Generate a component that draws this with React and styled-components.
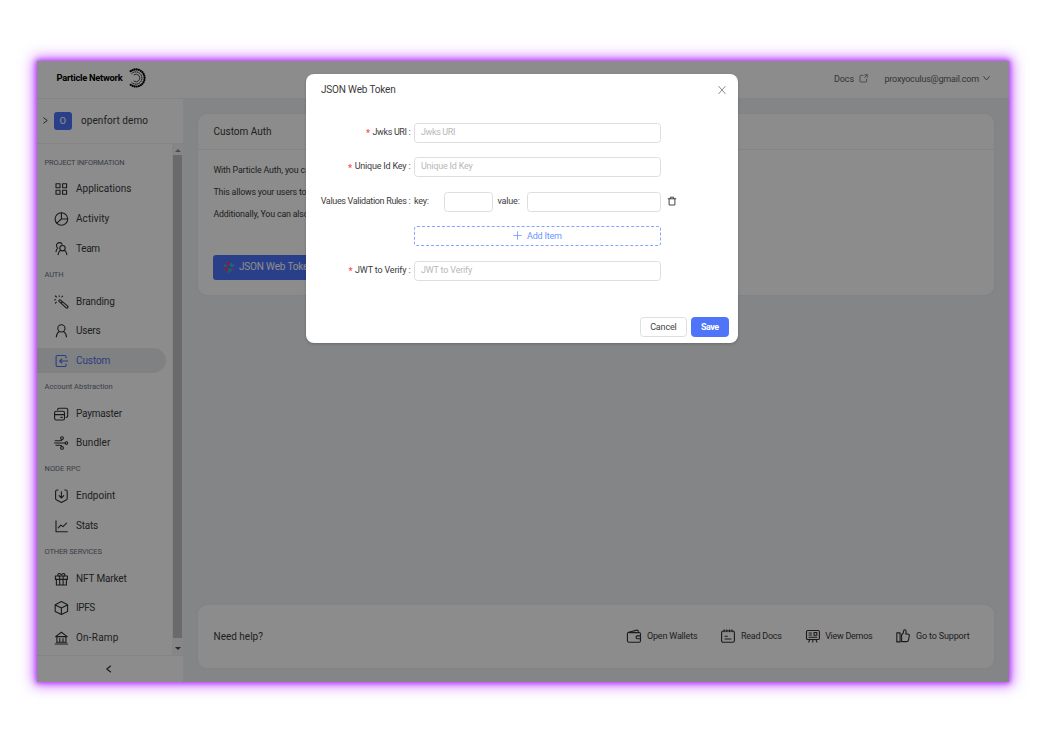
import React from "react";
import styled, { createGlobalStyle } from "styled-components";

const Global = createGlobalStyle`
  * { box-sizing: border-box; }
  body { margin: 0; background: #fff; font-family: Roboto, "Liberation Sans", sans-serif; }
  button, input { font-family: inherit; margin: 0; }
`;

const Page = styled.div`
  width: 1047px;
  height: 743px;
  padding: 61px 38px 61px 37px;
  overflow: hidden;
`;
const Frame = styled.div`
  position: relative;
  display: flex;
  flex-direction: column;
  width: 972px;
  height: 620.5px;
  background: #fff;
  box-shadow: 0 0 5px 1px #b637ff, 0 0 13px 3px rgba(182, 55, 255, 0.75);
`;
const Text = styled.span`
  font-size: ${(p) => p.$size || 10}px;
  letter-spacing: ${(p) => p.$ls || 0}px;
  color: ${(p) => p.$color || "#3a3a3a"};
  font-weight: ${(p) => p.$weight || 400};
  line-height: 14px;
  white-space: nowrap;
`;
const Svg = styled.svg`
  width: ${(p) => p.$s || 16}px;
  height: ${(p) => p.$s || 16}px;
  flex: none;
  fill: none;
  stroke: ${(p) => p.$c || "#303030"};
  stroke-width: ${(p) => p.$w || 1.1};
  stroke-linecap: round;
  stroke-linejoin: round;
`;

const Header = styled.header`
  height: 38px;
  display: flex;
  align-items: center;
  padding: 0 19px 3px 19.5px;
  border-bottom: 1px solid #f0f0f0;
`;
const Logo = styled.div`
  display: flex;
  align-items: center;
  gap: 4px;
  flex: 1;
`;
const HeaderLinks = styled.div`
  display: flex;
  align-items: center;
  padding-top: 1px;
`;
const EmailGroup = styled.div`
  display: flex;
  align-items: center;
  gap: 4px;
  margin-left: 16px;
`;
const DocsGroup = styled(EmailGroup)`
  gap: 5.5px;
  margin-left: 0;
`;
const Body = styled.div`
  flex: 1;
  display: flex;
  min-height: 0;
`;
const Sidebar = styled.aside`
  width: 146px;
  display: flex;
  flex-direction: column;
`;
const Workspace = styled.div`
  height: 44.5px;
  display: flex;
  align-items: center;
  padding-left: 5px;
  border-bottom: 1px solid #f0f0f0;
`;
const Badge = styled.div`
  width: 17.5px;
  height: 17.5px;
  border-radius: 3px;
  background: #4e74fa;
  color: #e8ecff;
  font-size: 9.5px;
  font-weight: 500;
  line-height: 17px;
  text-align: center;
  margin: 0 9.5px 0 5px;
`;
const NavArea = styled.div`
  flex: 1;
  display: flex;
  min-height: 0;
`;
const Nav = styled.nav`
  flex: 1;
  display: flex;
  flex-direction: column;
  padding-top: 8px;
`;
const SectionLabel = styled.div`
  height: 23.1px;
  padding: 0 0 1px 7.5px;
  display: flex;
  align-items: center;
`;
const NavItem = styled.div`
  height: 25px;
  margin: 2.35px 6px 2.35px 0;
  padding-left: 16px;
  display: flex;
  align-items: center;
  gap: 7px;
  border-radius: 0 13px 13px 0;
  background: ${(p) => (p.$active ? "#e9ecee" : "transparent")};
`;
const Scrollbar = styled.div`
  width: 11px;
  background: #f4f4f4;
  display: flex;
  flex-direction: column;
  align-items: center;
`;
const Arrow = styled.div`
  width: 0;
  height: 0;
  border: 3px solid transparent;
  ${(p) => (p.$up ? "border-bottom-color: #8b8b8b; border-top: 0; margin: 5px 0 3.5px;" : "border-top-color: #4b4b4b; border-bottom: 0; margin: 9px 0 5px;")}
`;
const Thumb = styled.div`
  flex: 1;
  width: 9px;
  background: #c1c1c1;
`;
const Collapse = styled.div`
  height: 27px;
  border-top: 1px solid #f0f0f0;
  display: flex;
  align-items: center;
  justify-content: center;
  padding: 1px 1.5px 0 0;
`;
const Main = styled.main`
  flex: 1;
  background: #eff2f5;
  display: flex;
  flex-direction: column;
  justify-content: space-between;
  padding: 15px 15.5px 13.5px 15px;
`;
const Card = styled.section`
  background: #fff;
  border-radius: 9px;
  box-shadow: 0 0 3px rgba(0, 0, 0, 0.05);
`;
const AuthCard = styled(Card)`
  height: 181px;
`;
const CardTitle = styled.div`
  height: 36px;
  padding: 1px 15.5px 0;
  display: flex;
  align-items: center;
  border-bottom: 1px solid #f0f0f0;
`;
const CardBody = styled.div`
  padding: 9px 15.4px;
`;
const Line = styled.div`
  height: 22.2px;
  display: flex;
  align-items: center;
`;
const TokenButton = styled.button`
  margin-top: 29.5px;
  width: 124px;
  height: 25px;
  border: 0;
  padding: 0 0 1px 9.5px;
  border-radius: 3px;
  background: #4e74fa;
  display: flex;
  align-items: center;
  gap: 4px;
`;
const HelpCard = styled(Card)`
  height: 63.5px;
  padding: 0 24px 1px 15.5px;
  display: flex;
  align-items: center;
`;
const HelpTitle = styled.div`
  flex: 1;
  display: flex;
  padding-top: 2px;
`;
const HelpLink = styled.div`
  display: flex;
  align-items: center;
  gap: 4.5px;
  margin-left: ${(p) => p.$ml || 0}px;
`;

const Mask = styled.div`
  position: absolute;
  inset: 0;
  background: rgba(0, 0, 0, 0.45);
`;
const Modal = styled.div`
  position: absolute;
  left: 269.4px;
  top: 13px;
  width: 432px;
  height: 269.4px;
  background: #fff;
  border-radius: 8px;
  box-shadow: 0 1px 3px rgba(0, 0, 0, 0.2);
  display: flex;
  flex-direction: column;
`;
const ModalHead = styled.div`
  height: 31px;
  padding: 0 11.5px 0 14.5px;
  display: flex;
  align-items: center;
  justify-content: space-between;
`;
const Form = styled.div`
  flex: 1;
  padding-top: 17.7px;
  display: flex;
  flex-direction: column;
  gap: 14.5px;
`;
const Row = styled.div`
  height: 20px;
  display: flex;
  align-items: center;
`;
const Label = styled.label`
  width: 104px;
  padding-bottom: 2px;
  margin-right: 3.5px;
  display: flex;
  justify-content: flex-end;
  align-items: center;
`;
const Star = styled.span`
  color: #ff4d4f;
  font-size: 9px;
  font-weight: 700;
  line-height: 10px;
  margin: 3px 2.5px 0 0;
`;
const Input = styled.input`
  width: ${(p) => p.$w || 247}px;
  height: 20px;
  border: 1px solid #dedede;
  border-radius: 3.5px;
  padding: 0 6px 2px;
  font-size: 9px;
  letter-spacing: ${(p) => p.$ls || 0}px;
  background: #fff;
  outline: none;
  &::placeholder { color: #b8b8b8; opacity: 1; }
`;
const Inline = styled.span`
  display: flex;
  width: ${(p) => p.$w}px;
  padding: 0 0 2px ${(p) => p.$pl || 0}px;
`;
const AddButton = styled.button`
  width: 247px;
  height: 20px;
  margin-left: 107.5px;
  border: 1px dashed #85a5ff;
  border-radius: 3px;
  background: #fff;
  display: flex;
  align-items: center;
  justify-content: center;
  gap: 5px;
  padding: 0 0 1px;
`;
const ModalFoot = styled.div`
  display: flex;
  justify-content: flex-end;
  gap: 4px;
  padding: 0 9.5px 6px 0;
`;
const Button = styled.button`
  width: ${(p) => p.$w}px;
  height: 20.5px;
  border-radius: 3.5px;
  padding: 0 0 1px;
  border: 1px solid ${(p) => (p.$primary ? "#4e74fa" : "#dedede")};
  background: ${(p) => (p.$primary ? "#4e74fa" : "#fff")};
  display: flex;
  align-items: center;
  justify-content: center;
`;

const icons = {
  apps: <><rect x="3" y="2.7" width="4" height="4" /><rect x="9.6" y="2.7" width="4" height="4" /><rect x="3" y="9.3" width="4" height="4" /><rect x="9.6" y="9.3" width="4" height="4" /></>,
  activity: <><circle cx="8.4" cy="8" r="6.3" /><path d="M8.4 1.7V8h6.3M8.4 8l-4.7 4.2" /></>,
  team: <><path d="M9.1 3.2A3 3 0 1 0 4.8 7.1C3.8 7.8 3.2 9 3 10.6" /><circle cx="9.5" cy="7.2" r="2.7" /><path d="M7.6 9.3c-1.4.9-2.2 2.3-2.5 4.3M11.4 9.3c1.4.9 2.2 2.3 2.5 4.3" /></>,
  wand: <><path d="M7.3 5.9 14.7 12.2a1.1 1.1 0 0 1-1.5 1.6L6 7.3a1 1 0 0 1 1.3-1.4zM9.4 7.7 8.1 9.1" /><path d="m2.4 2 1 1M6.2 1.7v.8M1.6 5.8h1M9.6 2.1l-.8.9M3.3 8.2l-.9.9" /></>,
  user: <><circle cx="8.4" cy="5.4" r="3.6" /><path d="M3.3 13.9c.4-3.2 1.5-4.6 3-5.4M13.5 13.9c-.4-3.2-1.5-4.6-3-5.4" /></>,
  custom: <><path d="M13.1 5V3.8A1.3 1.3 0 0 0 11.8 2.5H4.4A1.3 1.3 0 0 0 3.1 3.8v8.4a1.3 1.3 0 0 0 1.3 1.3h7.4a1.3 1.3 0 0 0 1.3-1.3V11M14.7 8H6.8M8.8 6 6.8 8l2 2" /></>,
  pay: <><rect x="1.6" y="5.2" width="9.9" height="8.8" rx="1.6" /><path d="M4.6 3.8A1.6 1.6 0 0 1 6.2 2.2h7a1.5 1.5 0 0 1 1.5 1.5v6.2a1.5 1.5 0 0 1-1.5 1.5M1.6 8.6h9.9M7.9 11.4h1.3" /></>,
  bundler: <><path d="M2.2 5.8h4.6c1.5 0 2.1-.5 2.1-1.4M1.6 8h10.6M3 10.2h3.8c1.5 0 2.1.5 2.1 1.4" /><circle cx="9" cy="3.1" r="1.4" /><circle cx="13.4" cy="8" r="1.3" /><circle cx="9" cy="12.9" r="1.4" /></>,
  endpoint: <><path d="M5 2h-.9a1.5 1.5 0 0 0-1.5 1.5v7c0 .8.5 1.3 1.1 1.6l4.7 2.3 4.7-2.3c.6-.3 1.1-.8 1.1-1.6v-7A1.5 1.5 0 0 0 12.7 2h-.9M8.4 3.8v6M6.1 7.7 8.4 10l2.3-2.3" /></>,
  stats: <><path d="M3 2.8v10.9h11.3M5.3 9.8l2.5-2.7 2.2 1.5 3.6-3.4" /></>,
  gift: <><rect x="2.4" y="5" width="12" height="3.4" /><path d="M3.4 8.4V14h10V8.4M6.7 5v9M10.1 5v9M5.4 5C4 3.4 5.9 1.1 8.4 3.8c2.5-2.7 4.4-.4 3 1.2" /></>,
  cube: <><path d="m8.4 1.6 6.2 3.1v6.7l-6.2 3.1-6.2-3.1V4.7zM2.4 4.9l6 3.1 6-3.1M8.4 8v6.2" /></>,
  bank: <><path d="m8.4 2.3 5.8 4.3H2.6zM2.2 14h12.4M3.4 12.2h10M3.9 6.8v5M6.8 8.5V12M10 8.5V12M12.9 6.8v5" /></>,
  wallet: <><path d="M3.1 4.6h10.1a1.3 1.3 0 0 1 1.3 1.3v6.9a1.4 1.4 0 0 1-1.4 1.4H2.9a1.5 1.5 0 0 1-1.5-1.5V5.7c0-.8.5-1.2 1.2-1.4L11 2.1a1 1 0 0 1 1.2 1v1.3M14.4 7.9h-3a1.4 1.4 0 0 0 0 2.8h3" /></>,
  doc: <><rect x="1.6" y="3" width="12.8" height="11.3" rx="1.8" /><path d="M4.1 1.9v1.9M6.8 1.9v1.9M9.5 1.9v1.9M12 1.9v1.9M5 8.3h2.3M5 11h6" /></>,
  demo: <><rect x="1.5" y="2.5" width="12.9" height="9" rx="1.3" /><rect x="9" y="4.5" width="2.8" height="2.8" /><path d="M4 5h2.5M4 7h2.5M4 9.2h7.8M4.7 11.7 3.7 14M7.8 11.7V14M11 11.7l.9 2.3" /></>,
  thumb: <><path d="M1.8 4.9h3.3v9H1.8zM6.6 13.6V6.6C8.2 5.8 8.7 4.3 8.8 2.6c.1-1.4 2.2-1.2 2.3.6.1 1-.1 1.9-.4 2.8h2c1.2 0 1.8.9 1.6 2l-.8 4.1c-.2.9-.8 1.5-1.7 1.5z" /></>,
};
const Icon = ({ name, color, size, width }) => (
  <Svg viewBox="0 0 16 16" $c={color} $s={size} $w={width}>{icons[name]}</Svg>
);

const sections = [
  ["PROJECT INFORMATION", -0.18, [["apps", "Applications", 0], ["activity", "Activity", 0.07], ["team", "Team", -0.3]]],
  ["AUTH", -0.18, [["wand", "Branding", -0.1], ["user", "Users", -0.2], ["custom", "Custom", -0.1]]],
  ["Account Abstraction", 0, [["pay", "Paymaster", -0.2], ["bundler", "Bundler", 0.05]]],
  ["NODE RPC", 0.05, [["endpoint", "Endpoint", 0]  , ["stats", "Stats", -0.2]]],
  ["OTHER SERVICES", -0.15, [["gift", "NFT Market", -0.15], ["cube", "IPFS", -0.45], ["bank", "On-Ramp", 0.22]]],
];

const dots = Array.from({ length: 19 }, (_, i) => {
  const a = ((-128 + i * 14.2) * Math.PI) / 180;
  return [10 + 8.6 * Math.cos(a), 10 + 8.6 * Math.sin(a)];
});
const ParticleMark = () => (
  <Svg viewBox="0 0 20 20" $s={20} $c="#000" $w={1}>
    {dots.map(([x, y], i) => <circle key={i} cx={x} cy={y} r="1.15" fill="#000" stroke="none" />)}
    <path d="M5.4 5.8A6.1 6.1 0 1 1 5.4 14.2" strokeDasharray="1.4 .5" strokeLinecap="butt" />
    <path d="M8 6.8A3.8 3.8 0 1 1 8 13.2" strokeWidth=".7" />
  </Svg>
);

const Field = ({ label, ls, name }) => (
  <Row>
    <Label>
      <Star>*</Star>
      <Text $size={9} $ls={ls} $color="#3c3c3c">{label} :</Text>
    </Label>
    <Input placeholder={name} $ls={ls} />
  </Row>
);

export default function App() {
  return (
    <Page>
      <Global />
      <Frame>
        <Header>
          <Logo>
            <Text $size={9.3} $weight={700} $color="#000" $ls={-0.25}>Particle Network</Text>
            <ParticleMark />
          </Logo>
          <HeaderLinks>
            <DocsGroup>
              <Text $size={9} $color="#5c5f66" $ls={-0.1}>Docs</Text>
              <Svg viewBox="0 0 10 10" $s={9} $c="#73767d" $w={0.9}><path d="M4.5 1.5H1.8a.7.7 0 0 0-.7.7v6a.7.7 0 0 0 .7.7h6a.7.7 0 0 0 .7-.7V5.5M6.3.8h2.9v2.9M9 1 6.2 3.8" /></Svg>
            </DocsGroup>
            <EmailGroup>
              <Text $size={9} $color="#5c5f66" $ls={-0.2}>proxyoculus@gmail.com</Text>
              <Svg viewBox="0 0 8 8" $s={7} $c="#5c5f66" $w={1}><path d="m.8 1.8 3.2 4 3.2-4" /></Svg>
            </EmailGroup>
          </HeaderLinks>
        </Header>
        <Body>
          <Sidebar>
            <Workspace>
              <Svg viewBox="0 0 7 8" $s={7} $w={1}><path d="m1.5 1 4 3-4 3" /></Svg>
              <Badge>O</Badge>
              <Text $size={10} $ls={0.07}>openfort demo</Text>
            </Workspace>
            <NavArea>
              <Nav>
                {sections.map(([title, tls, items]) => (
                  <React.Fragment key={title}>
                    <SectionLabel><Text $size={7.5} $ls={tls} $color="#6b7080">{title}</Text></SectionLabel>
                    {items.map(([icon, name, ls]) => {
                      const active = icon === "custom";
                      return (
                        <NavItem key={name} $active={active}>
                          <Icon name={icon} color={active ? "#5470e8" : "#303030"} />
                          <Text $size={10} $ls={ls} $color={active ? "#5470e8" : "#3a3a3a"}>{name}</Text>
                        </NavItem>
                      );
                    })}
                  </React.Fragment>
                ))}
              </Nav>
              <Scrollbar><Arrow $up /><Thumb /><Arrow /></Scrollbar>
            </NavArea>
            <Collapse><Svg viewBox="0 0 8 8" $s={8}><path d="M5.6 1 1.8 4l3.8 3" /></Svg></Collapse>
          </Sidebar>
          <Main>
            <AuthCard>
              <CardTitle><Text $size={10} $ls={0}>Custom Auth</Text></CardTitle>
              <CardBody>
                <Line><Text $size={8.8} $ls={-0.13}>With Particle Auth, you can</Text></Line>
                <Line><Text $size={8.8} $ls={-0.16}>This allows your users to log</Text></Line>
                <Line><Text $size={8.8} $ls={-0.16}>Additionally, You can also</Text></Line>
                <TokenButton>
                  <Svg viewBox="0 0 12 12" $s={12} $w={1.8}>
                    <path d="M6 1v2.5M4 2.2l1 1.5" stroke="#e83e72" /><path d="M8.5 2.7 7.5 4M8.6 5l2-.7" stroke="#25c7d9" />
                    <path d="M9 7.3l1.6.4" stroke="#d63aff" /><path d="M6 8.6V11M7.3 8.2l1 1.4" stroke="#22c6a2" />
                    <path d="M4.6 8 3.5 9.5M3.3 7l-2 .7" stroke="#e83e72" /><path d="M3 4.8 1.4 4.3" stroke="#22c6d2" />
                  </Svg>
                  <Text $size={10} $ls={-0.15} $color="#fff">JSON Web Token</Text>
                </TokenButton>
              </CardBody>
            </AuthCard>
            <HelpCard>
              <HelpTitle><Text $size={10} $ls={0}>Need help?</Text></HelpTitle>
              <HelpLink><Icon name="wallet" /><Text $size={9} $ls={-0.18}>Open Wallets</Text></HelpLink>
              <HelpLink $ml={23}><Icon name="doc" /><Text $size={9} $ls={-0.25}>Read Docs</Text></HelpLink>
              <HelpLink $ml={23}><Icon name="demo" /><Text $size={9} $ls={-0.27}>View Demos</Text></HelpLink>
              <HelpLink $ml={23}><Icon name="thumb" /><Text $size={9} $ls={-0.15}>Go to Support</Text></HelpLink>
            </HelpCard>
          </Main>
        </Body>
        <Mask />
        <Modal>
          <ModalHead>
            <Text $size={10} $ls={-0.15}>JSON Web Token</Text>
            <Svg viewBox="0 0 10 10" $s={10} $c="#8c8c8c" $w={1}><path d="m1.8 1.4 6.4 7.2M8.2 1.4 1.8 8.6" /></Svg>
          </ModalHead>
          <Form>
            <Field label="Jwks URI" name="Jwks URI" ls={-0.35} />
            <Field label="Unique Id Key" name="Unique Id Key" ls={-0.2} />
            <Row>
              <Label><Text $size={9} $ls={-0.33} $color="#3c3c3c">Values Validation Rules :</Text></Label>
              <Inline $w={29.7}><Text $size={9} $ls={-0.2} $color="#3c3c3c">key:</Text></Inline>
              <Input $w={49.3} aria-label="key" />
              <Inline $w={34} $pl={4.5}><Text $size={9} $ls={-0.15} $color="#3c3c3c">value:</Text></Inline>
              <Input $w={134} aria-label="value" />
              <Inline $w={20} $pl={6}>
                <Svg viewBox="0 0 10 10" $s={10} $c="#444" $w={1}><path d="M1.2 2.8h7.6M3.3 2.6V1.2h3.4v1.4M2.1 3v6h5.8V3" /></Svg>
              </Inline>
            </Row>
            <AddButton>
              <Svg viewBox="0 0 10 10" $s={9} $c="#7f9eff" $w={1}><path d="M5 .8v8.4M.8 5h8.4" /></Svg>
              <Text $size={9} $ls={-0.2} $color="#7093ff">Add Item</Text>
            </AddButton>
            <Field label="JWT to Verify" name="JWT to Verify" ls={-0.18} />
          </Form>
          <ModalFoot>
            <Button $w={47}><Text $size={9} $ls={-0.15} $color="#444">Cancel</Text></Button>
            <Button $w={38} $primary><Text $size={9} $ls={-0.5} $color="#fff" $weight={700}>Save</Text></Button>
          </ModalFoot>
        </Modal>
      </Frame>
    </Page>
  );
}
